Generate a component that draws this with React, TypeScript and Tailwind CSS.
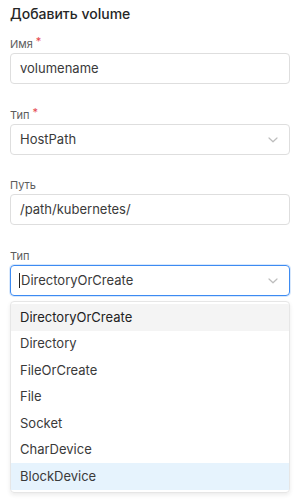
import React from "react";

const Chevron = () => (
  <svg width="10" height="6" viewBox="0 0 10 6" fill="none" className="shrink-0">
    <path d="M1 1l4 3.8L9 1" stroke="#bdbdbd" strokeWidth="1.2" strokeLinecap="round" strokeLinejoin="round" />
  </svg>
);

const Label = ({ text, required }: { text: string; required?: boolean }) => (
  <div className="h-[14px] text-[11px] leading-[14px] text-[#5c5c5c]">
    {text}
    {required && <span className="relative -top-[3px] ml-[3px] text-[#e5484d]">*</span>}
  </div>
);

const items = ["DirectoryOrCreate", "Directory", "FileOrCreate", "File", "Socket", "CharDevice", "BlockDevice"];

export default function App() {
  return (
    <div
      className="h-[502px] w-[300px] bg-white px-[10px] text-[#3a3a3a]"
      style={{ fontFamily: "Inter, 'Noto Sans', sans-serif" }}
    >
      <div className="pt-[4px] text-[14px] font-medium leading-[20px] text-[#262626]">Добавить volume</div>

      <div className="mt-[13px]">
        <Label text="Имя" required />
        <div className="mt-[2px] flex h-[31px] items-center rounded-[4px] border border-[#dedede] px-[9px] text-[13px]">
          volumename
        </div>
      </div>

      <div className="mt-[24px]">
        <Label text="Тип" required />
        <div className="mt-[2px] flex h-[31px] items-center justify-between rounded-[4px] border border-[#dedede] pl-[9px] pr-[11px] text-[13px]">
          <span>HostPath</span>
          <Chevron />
        </div>
      </div>

      <div className="mt-[23px]">
        <Label text="Путь" />
        <div className="mt-[2px] flex h-[31px] items-center rounded-[4px] border border-[#dedede] px-[9px] text-[13px]">
          /path/kubernetes/
        </div>
      </div>

      <div className="mt-[24px]">
        <Label text="Тип" />
        <div className="mt-[2px] flex h-[31px] items-center justify-between rounded-[4px] border border-[#3d8bf2] pl-[8px] pr-[11px] text-[13px] shadow-[0_0_0_1px_rgba(61,139,242,0.2)]">
          <span className="flex items-center">
            <span className="mr-[1px] inline-block h-[15px] w-[1px] bg-[#222]" />
            DirectoryOrCreate
          </span>
          <Chevron />
        </div>
        <div className="mt-[5px] rounded-[4px] border border-[#e6e6e6] py-[2px] shadow-[0_2px_4px_rgba(0,0,0,0.08)]">
          {items.map((it, i) => (
            <div
              key={it}
              className={`flex h-[26.5px] items-center px-[9px] text-[13px] ${
                i === 0 ? "bg-[#f4f4f4] text-[#222]" : i === items.length - 1 ? "bg-[#e6f3fd]" : ""
              }`}
            >
              {it}
            </div>
          ))}
        </div>
      </div>
    </div>
  );
}
